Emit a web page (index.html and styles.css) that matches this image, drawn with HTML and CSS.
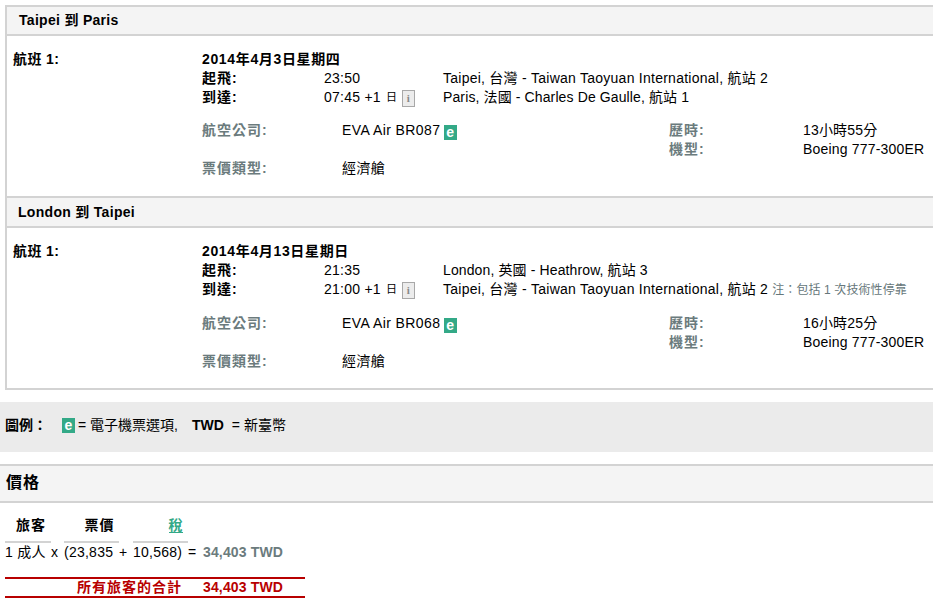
FILE: index.html
```html
<!DOCTYPE html>
<html lang="zh-Hant">
<head>
<meta charset="utf-8">
<title>行程</title>
<link rel="stylesheet" href="styles.css">
</head>
<body>
<section class="itinerary">
  <h2 class="leg-head">Taipei 到 Paris</h2>
  <div class="flight">
    <div class="flight-no">航班 1:</div>
    <div class="flight-main">
      <div class="date">2014年4月3日星期四</div>
      <div class="stop"><b>起飛:</b><span>23:50</span><span>Taipei, 台灣 - Taiwan Taoyuan International, 航站 2</span></div>
      <div class="stop"><b>到達:</b><span class="time">07:45 +1 <small>日</small> <i class="info">i</i></span><span class="tight">Paris, 法國 - Charles De Gaulle, 航站 1</span></div>
      <div class="details">
        <div class="label">航空公司:</div><div class="value">EVA Air BR087 <i class="etk">e</i></div><div class="label">歷時:</div><div>13小時55分</div>
        <div></div><div></div><div class="label">機型:</div><div>Boeing 777-300ER</div>
        <div class="label">票價類型:</div><div class="value">經濟艙</div><div></div><div></div>
      </div>
    </div>
  </div>
  <h2 class="leg-head leg-next">London 到 Taipei</h2>
  <div class="flight">
    <div class="flight-no">航班 1:</div>
    <div class="flight-main">
      <div class="date">2014年4月13日星期日</div>
      <div class="stop"><b>起飛:</b><span>21:35</span><span class="tight">London, 英國 - Heathrow, 航站 3</span></div>
      <div class="stop"><b>到達:</b><span class="time">21:00 +1 <small>日</small> <i class="info">i</i></span><span>Taipei, 台灣 - Taiwan Taoyuan International, 航站 2 <small class="note">注：包括 1 次技術性停靠</small></span></div>
      <div class="details">
        <div class="label">航空公司:</div><div class="value">EVA Air BR068 <i class="etk">e</i></div><div class="label">歷時:</div><div>16小時25分</div>
        <div></div><div></div><div class="label">機型:</div><div>Boeing 777-300ER</div>
        <div class="label">票價類型:</div><div class="value">經濟艙</div><div></div><div></div>
      </div>
    </div>
  </div>
</section>

<section class="legend">
  <b class="legend-title">圖例：</b>
  <i class="etk">e</i>
  <span>= 電子機票選項,</span>
  <b class="legend-code">TWD</b>
  <span>= 新臺幣</span>
</section>

<section class="price">
  <h2 class="price-head">價格</h2>
  <div class="price-grid">
    <div class="col-head col-pax">旅客</div><div></div>
    <div class="col-head col-fare">票價</div><div></div>
    <div class="col-head col-tax"><span class="tax-link">稅</span></div><div></div><div></div>
    <div>1 成人</div><div>x</div>
    <div>(23,835</div><div>+</div>
    <div>10,568)</div><div>=</div>
    <div class="sum">34,403 TWD</div>
  </div>
  <div class="grand">
    <span class="grand-label">所有旅客的合計</span>
    <span class="grand-sum">34,403 TWD</span>
  </div>
</section>
</body>
</html>
```
FILE: styles.css
```css
* { box-sizing: border-box; }
html, body { margin: 0; padding: 0; }
body {
  width: 933px;
  height: 604px;
  overflow: hidden;
  background: #fff;
  color: #000;
  font-family: "Liberation Sans", "Noto Sans CJK TC", sans-serif;
  font-size: 14px;
  line-height: 19px;
  letter-spacing: .25px;
}
i { font-style: normal; }
small { font-size: 12px; letter-spacing: 0; }

.itinerary {
  margin: 5px 0 0 5px;
  border: 2px solid #d3d3d3;
  border-right: 0;
  height: 385px;
}
.leg-head {
  margin: 0;
  height: 29px;
  padding: 4px 0 0 12px;
  background: #f4f4f4;
  border-bottom: 2px solid #d3d3d3;
  font-size: 14px;
  font-weight: bold;
  line-height: 19px;
  letter-spacing: .3px;
}
.leg-next {
  height: 32px;
  padding: 5px 0 0 11px;
  border-top: 2px solid #d3d3d3;
}
.flight {
  display: grid;
  grid-template-columns: 189px 1fr;
  height: 160px;
  padding: 14px 0 0 6px;
}
.flight-no { font-weight: bold; letter-spacing: .4px; }
.date { font-weight: bold; letter-spacing: .65px; }
.stop {
  display: grid;
  grid-template-columns: 122px 119px 1fr;
  white-space: nowrap;
}
.stop b { letter-spacing: 1px; }
.tight { letter-spacing: .12px; }
.time { display: flex; align-items: flex-start; gap: 5px; }
.time small { font-size: 11px; line-height: 19px; }
.info {
  display: block;
  width: 13px;
  height: 17px;
  margin-top: 2px;
  border: 1px solid #a8a8a8;
  background: #ececec;
  color: #888;
  font: bold 11px/15px "Liberation Serif", serif;
  letter-spacing: 0;
  text-align: center;
}
.note { color: #66777a; letter-spacing: .1px; }
.details {
  display: grid;
  grid-template-columns: 140px 327px 134px 1fr;
  margin-top: 14px;
  white-space: nowrap;
}
.details > div:nth-child(4n) { letter-spacing: .18px; }
.value { letter-spacing: .4px; }
.label { color: #6b7b7d; font-weight: bold; letter-spacing: 1px; }
.etk {
  display: inline-block;
  width: 13px;
  height: 15px;
  background: #33a987;
  color: #fff;
  font: bold 14px/15px "Liberation Sans", sans-serif;
  letter-spacing: 0;
  text-align: center;
  vertical-align: -2px;
}
.value .etk { margin-left: -1px; }

.legend {
  display: flex;
  align-items: center;
  height: 50px;
  margin-top: 12px;
  padding: 0 0 3px 5px;
  background: #ebebeb;
  letter-spacing: 0;
  white-space: nowrap;
}
.legend-title { width: 57px; }
.legend .etk { margin-right: 3px; }
.legend-code { margin: 0 8px 0 14px; }

.price { margin-top: 12px; }
.price-head {
  margin: 0;
  height: 39px;
  padding: 6px 0 0 6px;
  background: #f4f4f4;
  border-top: 2px solid #d3d3d3;
  border-bottom: 2px solid #d3d3d3;
  font-size: 16px;
  font-weight: bold;
  line-height: 22px;
  letter-spacing: 1px;
}
.price-grid {
  display: grid;
  grid-template-columns: 46px 13px 55px 14px 55px 15px auto;
  margin: 13px 0 0 5px;
  white-space: nowrap;
}
.col-head {
  height: 27px;
  border-bottom: 2px solid #d3d3d3;
  text-align: center;
  font-weight: bold;
  letter-spacing: 1px;
}
.col-pax { padding-left: 6px; }
.col-fare { padding-left: 16px; }
.col-tax { color: #33a987; padding-left: 30px; }
.tax-link {
  display: inline-block;
  height: 17px;
  border-bottom: 1px solid #33a987;
  letter-spacing: 0;
}
.sum { color: #6b7b7d; font-weight: bold; letter-spacing: .15px; }
.grand {
  display: flex;
  width: 300px;
  height: 21px;
  margin: 15px 0 0 5px;
  border-top: 2px solid #b80000;
  border-bottom: 2px solid #b80000;
  color: #b80000;
  font-weight: bold;
  line-height: 17px;
  white-space: nowrap;
}
.grand-label { width: 177px; text-align: right; letter-spacing: 1px; }
.grand-sum { margin-left: 21px; letter-spacing: .15px; }
```
